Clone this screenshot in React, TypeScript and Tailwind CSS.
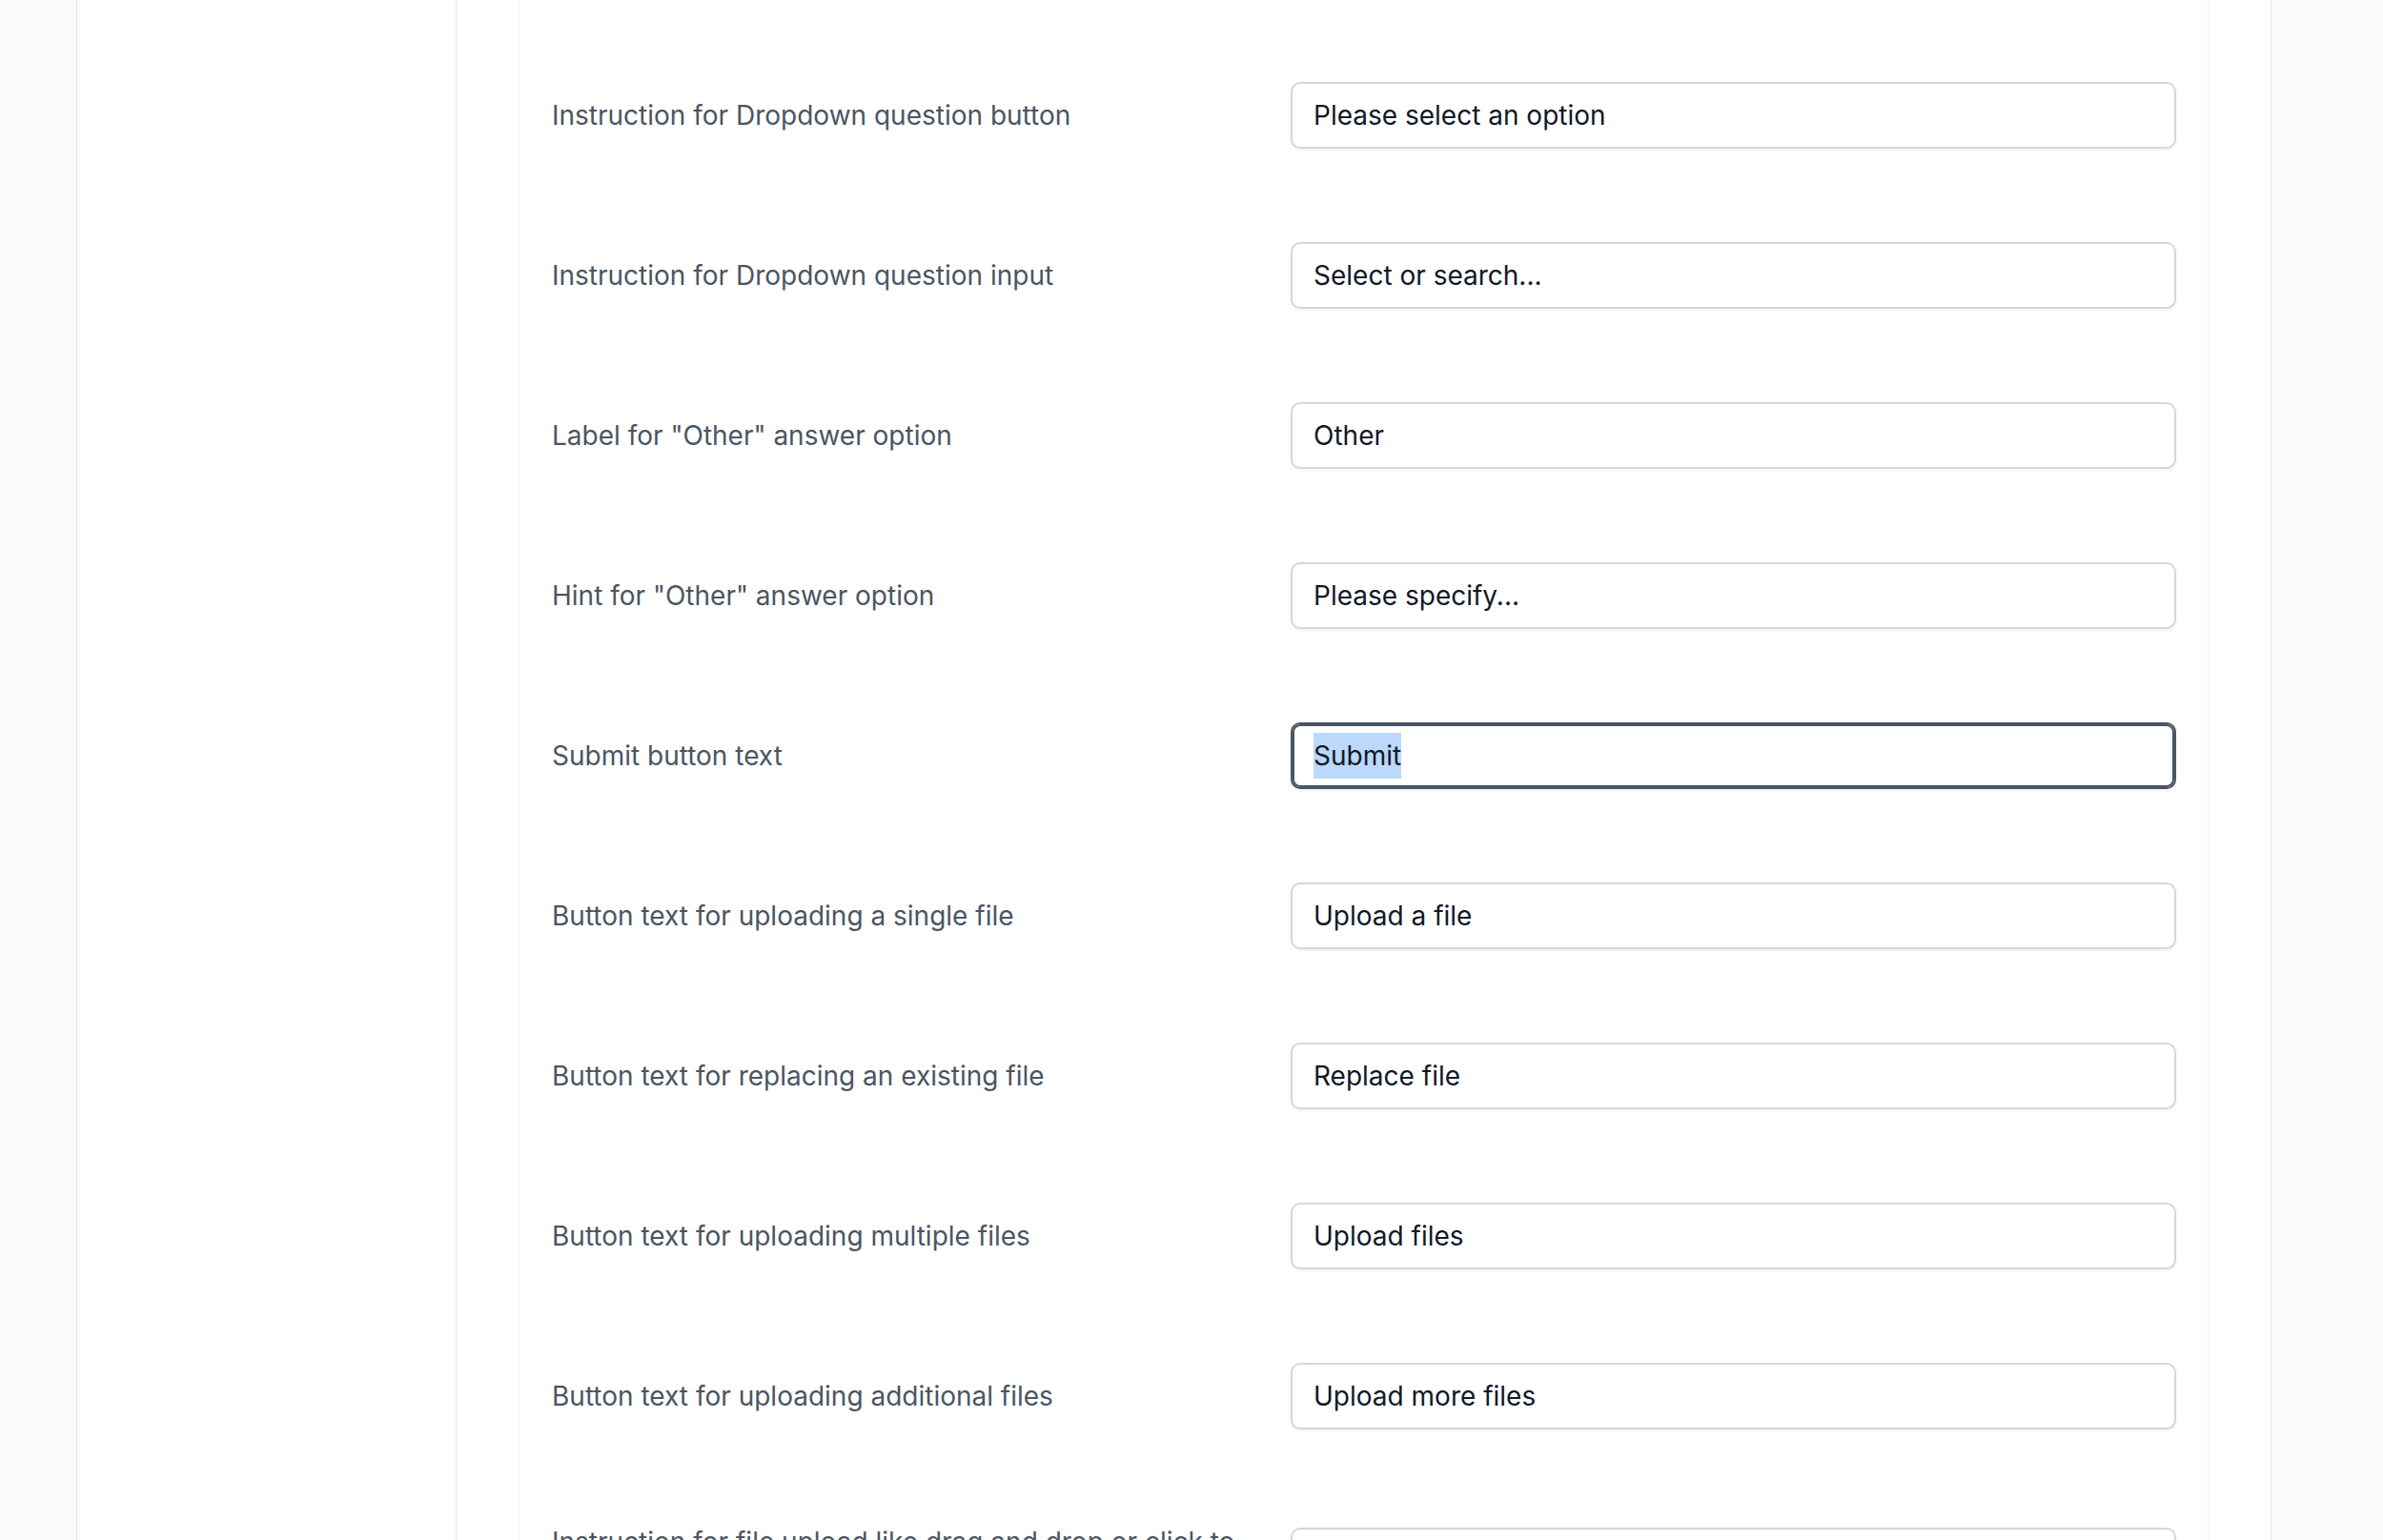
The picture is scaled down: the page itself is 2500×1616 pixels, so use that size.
import React from "react";

const rows: { label: string; value: string; focused?: boolean }[] = [
  { label: "Instruction for Dropdown question button", value: "Please select an option" },
  { label: "Instruction for Dropdown question input", value: "Select or search..." },
  { label: 'Label for "Other" answer option', value: "Other" },
  { label: 'Hint for "Other" answer option', value: "Please specify..." },
  { label: "Submit button text", value: "Submit", focused: true },
  { label: "Button text for uploading a single file", value: "Upload a file" },
  { label: "Button text for replacing an existing file", value: "Replace file" },
  { label: "Button text for uploading multiple files", value: "Upload files" },
  { label: "Button text for uploading additional files", value: "Upload more files" },
  { label: "Instruction for file upload like drag and drop or click to select", value: "Drag and drop or click to select" },
];

export default function App() {
  return (
    <div className="h-[1616px] w-[2500px] overflow-hidden bg-[#f9fafb] flex font-['Inter','Noto_Sans',sans-serif]">
      <div className="ml-[80px] w-[2303px] h-full flex bg-white border-x border-[#e5e7eb]">
        <div className="w-[398px] h-full border-r border-[#e5e7eb] shrink-0" />
        <div className="ml-[65px] w-[1773px] h-full shrink-0 border-x border-[#f1f2f4] pl-[34px] pr-[33px] pt-[86px]">
          <div className="flex flex-col gap-[98px]">
            {rows.map((r) => (
              <div key={r.label} className="flex items-center">
                <div className="w-[775px] shrink-0 pr-[48px] text-[28px] leading-[40px] text-[#4b5563]">
                  {r.label}
                </div>
                <div
                  className={
                    r.focused
                      ? "flex-1 h-[70px] rounded-[10px] border-2 border-[#4b5563] ring-2 ring-inset ring-[#4b5563] bg-white flex items-center px-[22px] shadow-[0_2px_3px_rgba(0,0,0,0.06)]"
                      : "flex-1 h-[70px] rounded-[10px] border-2 border-[#d4d7dd] bg-white flex items-center px-[22px] shadow-[0_2px_3px_rgba(0,0,0,0.06)]"
                  }
                >
                  <span
                    className={
                      r.focused
                        ? "text-[28px] leading-[48px] text-[#111827] bg-[#bcd8fc]"
                        : "text-[28px] leading-[48px] text-[#111827]"
                    }
                  >
                    {r.value}
                  </span>
                </div>
              </div>
            ))}
          </div>
        </div>
      </div>
    </div>
  );
}
